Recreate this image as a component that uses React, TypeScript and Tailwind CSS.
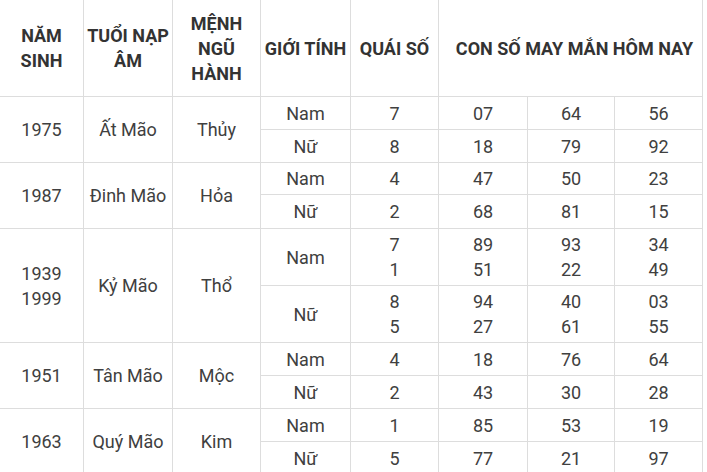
import React from "react";

type Sub = { g: string; q: string[]; n: string[][] };
type Group = { year: string[]; tuoi: string; menh: string; subs: Sub[] };

const groups: Group[] = [
  {
    year: ["1975"],
    tuoi: "Ất Mão",
    menh: "Thủy",
    subs: [
      { g: "Nam", q: ["7"], n: [["07"], ["64"], ["56"]] },
      { g: "Nữ", q: ["8"], n: [["18"], ["79"], ["92"]] },
    ],
  },
  {
    year: ["1987"],
    tuoi: "Đinh Mão",
    menh: "Hỏa",
    subs: [
      { g: "Nam", q: ["4"], n: [["47"], ["50"], ["23"]] },
      { g: "Nữ", q: ["2"], n: [["68"], ["81"], ["15"]] },
    ],
  },
  {
    year: ["1939", "1999"],
    tuoi: "Kỷ Mão",
    menh: "Thổ",
    subs: [
      { g: "Nam", q: ["7", "1"], n: [["89", "51"], ["93", "22"], ["34", "49"]] },
      { g: "Nữ", q: ["8", "5"], n: [["94", "27"], ["40", "61"], ["03", "55"]] },
    ],
  },
  {
    year: ["1951"],
    tuoi: "Tân Mão",
    menh: "Mộc",
    subs: [
      { g: "Nam", q: ["4"], n: [["18"], ["76"], ["64"]] },
      { g: "Nữ", q: ["2"], n: [["43"], ["30"], ["28"]] },
    ],
  },
  {
    year: ["1963"],
    tuoi: "Quý Mão",
    menh: "Kim",
    subs: [
      { g: "Nam", q: ["1"], n: [["85"], ["53"], ["19"]] },
      { g: "Nữ", q: ["5"], n: [["77"], ["21"], ["97"]] },
    ],
  },
];

function Lines({ items }: { items: string[] }) {
  return (
    <>
      {items.map((t, i) => (
        <div key={i}>{t}</div>
      ))}
    </>
  );
}

const cell =
  "bg-white flex flex-col items-center justify-center text-center text-[18px] leading-[25px] text-[#404040]";
const head =
  "bg-white flex flex-col items-center justify-center text-center text-[18px] leading-[25px] font-bold text-[#333333]";

export default function App() {
  return (
    <div className="w-[707px] h-[472px] overflow-hidden bg-white" style={{ fontFamily: "Roboto, 'Noto Sans', sans-serif" }}>
      <div className="w-[703px] grid gap-px bg-[#dddddd] pr-px grid-cols-[83px_88px_87px_89px_87px_88px_86px_87px] grid-rows-[96px_32px_32px_31px_33px_56px_56px_32px_32px_32px_32px]">
        <div className={head}>
          <div>NĂM</div>
          <div>SINH</div>
        </div>
        <div className={head}>
          <div>TUỔI NẠP</div>
          <div>ÂM</div>
        </div>
        <div className={head}>
          <div>MỆNH</div>
          <div>NGŨ</div>
          <div>HÀNH</div>
        </div>
        <div className={head}>GIỚI TÍNH</div>
        <div className={head}>QUÁI SỐ</div>
        <div className={head + " col-span-3 pl-[8px]"}>CON SỐ MAY MẮN HÔM NAY</div>
        {groups.map((g, gi) => (
          <React.Fragment key={gi}>
            <div className={cell + " row-span-2"}>
              <Lines items={g.year} />
            </div>
            <div className={cell + " row-span-2"}>{g.tuoi}</div>
            <div className={cell + " row-span-2"}>{g.menh}</div>
            {g.subs.map((s, si) => (
              <React.Fragment key={si}>
                <div className={cell}>{s.g}</div>
                <div className={cell}>
                  <Lines items={s.q} />
                </div>
                {s.n.map((col, ci) => (
                  <div key={ci} className={cell}>
                    <Lines items={col} />
                  </div>
                ))}
              </React.Fragment>
            ))}
          </React.Fragment>
        ))}
      </div>
    </div>
  );
}
